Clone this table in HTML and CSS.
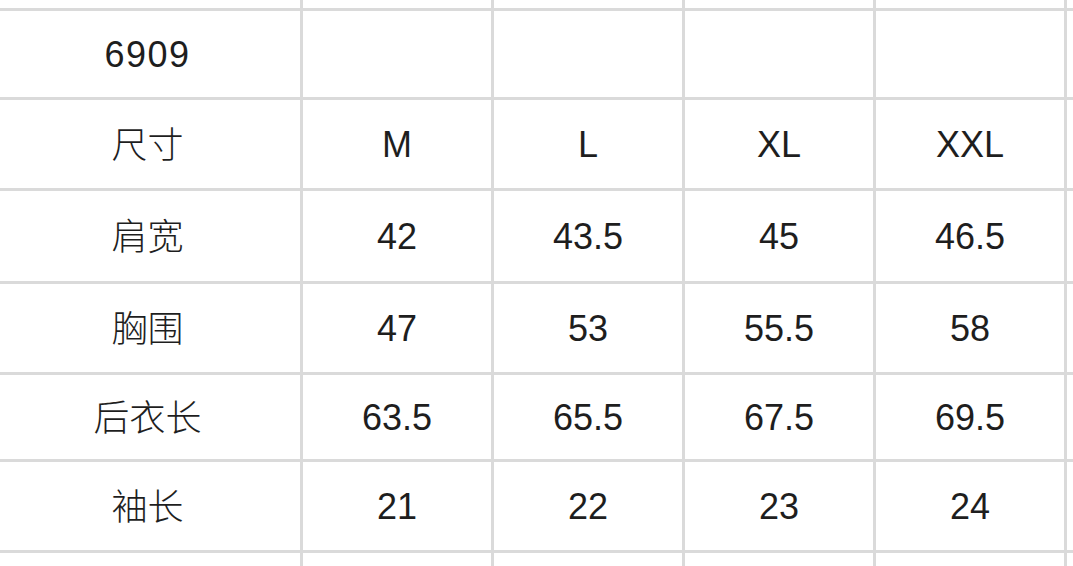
FILE: index.html
```html
<!DOCTYPE html>
<html lang="zh">
<head>
<meta charset="utf-8">
<title>尺码表</title>
<link rel="stylesheet" href="styles.css">
</head>
<body>
<div class="sheet">
  <div class="cell"></div><div class="cell"></div><div class="cell"></div><div class="cell"></div><div class="cell"></div><div class="cell"></div>
  <div class="cell label code">6909</div><div class="cell"></div><div class="cell"></div><div class="cell"></div><div class="cell"></div><div class="cell"></div>
  <div class="cell label">尺寸</div><div class="cell">M</div><div class="cell">L</div><div class="cell">XL</div><div class="cell">XXL</div><div class="cell"></div>
  <div class="cell label">肩宽</div><div class="cell">42</div><div class="cell">43.5</div><div class="cell">45</div><div class="cell">46.5</div><div class="cell"></div>
  <div class="cell label">胸围</div><div class="cell">47</div><div class="cell">53</div><div class="cell">55.5</div><div class="cell">58</div><div class="cell"></div>
  <div class="cell label">后衣长</div><div class="cell">63.5</div><div class="cell">65.5</div><div class="cell">67.5</div><div class="cell">69.5</div><div class="cell"></div>
  <div class="cell label">袖长</div><div class="cell">21</div><div class="cell">22</div><div class="cell">23</div><div class="cell">24</div><div class="cell"></div>
  <div class="cell"></div><div class="cell"></div><div class="cell"></div><div class="cell"></div><div class="cell"></div><div class="cell"></div>
</div>
</body>
</html>
```
FILE: styles.css
```css
html, body {
  margin: 0;
  padding: 0;
  background: #ffffff;
  overflow: hidden;
}
.sheet {
  display: grid;
  grid-template-columns: 300px 188px 188px 188px 188px 20px;
  grid-template-rows: 8px 86px 88px 90px 88px 84px 88px 20px;
  gap: 3px;
  background: #dadada;
  width: 1092px;
  font-family: "Liberation Sans", "Noto Sans CJK SC", sans-serif;
  font-size: 36px;
  color: #1e1e1e;
}
.cell {
  background: #ffffff;
  display: flex;
  align-items: center;
  justify-content: center;
  padding-top: 2px;
  box-sizing: border-box;
}
.label {
  padding-top: 0;
  padding-bottom: 4px;
  padding-right: 5px;
  font-family: "Noto Sans CJK SC", "Liberation Sans", sans-serif;
  font-weight: 300;
}
.code {
  font-family: "Liberation Sans", sans-serif;
  font-weight: 400;
  letter-spacing: 1.5px;
  padding-bottom: 0;
  padding-top: 2px;
}
```
